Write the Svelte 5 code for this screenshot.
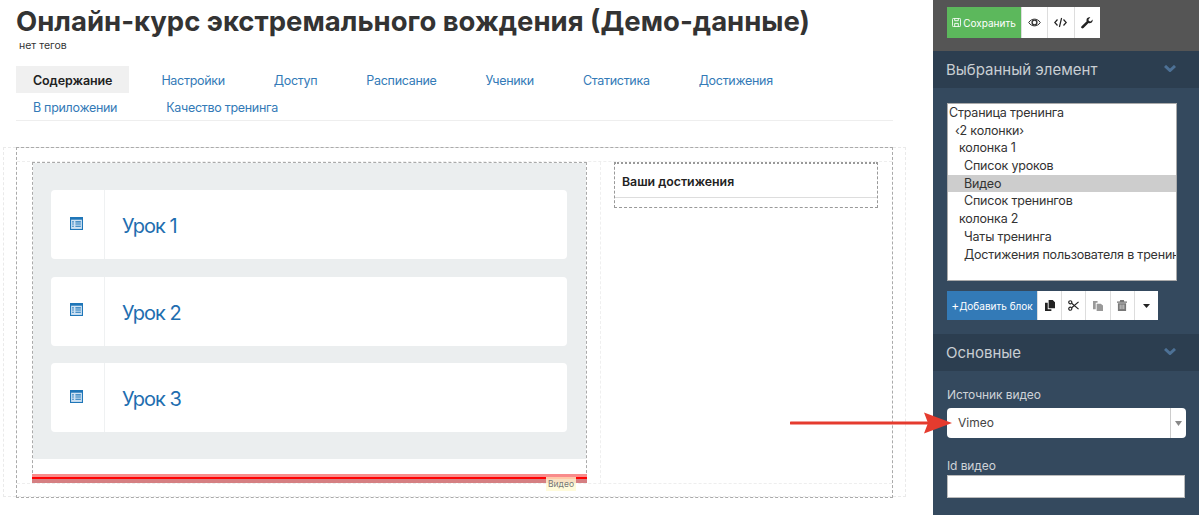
<script>
  const tabs = ["Содержание", "Настройки", "Доступ", "Расписание", "Ученики", "Статистика", "Достижения", "В приложении", "Качество тренинга"];
  const lessons = ["Урок 1", "Урок 2", "Урок 3"];
  const tree = [
    { label: "Страница тренинга", indent: 0 },
    { label: "‹2 колонки›", indent: 6 },
    { label: "колонка 1", indent: 10 },
    { label: "Список уроков", indent: 15 },
    { label: "Видео", indent: 15, selected: true },
    { label: "Список тренингов", indent: 15 },
    { label: "колонка 2", indent: 10 },
    { label: "Чаты тренинга", indent: 15 },
    { label: "Достижения пользователя в тренинге", indent: 15 }
  ];
</script>

<div class="page">
  <main>
    <h1>Онлайн-курс экстремального вождения (Демо-данные)</h1>
    <div class="tags">нет тегов</div>
    <nav>
      {#each tabs as tab, i}
        <a href="#tab" class:active={i === 0}>{tab}</a>
      {/each}
    </nav>

    <div class="canvas-ghost">
      <div class="canvas">
        <div class="row">
          <div class="left">
            <div class="lessons">
              {#each lessons as lesson}
                <div class="lesson">
                  <div class="lesson-icon">
                    <svg width="13" height="13" viewBox="0 0 12 12">
                      <rect x="0.5" y="0.5" width="11" height="11" fill="#cfe2f3" stroke="#1f76b8" />
                      <rect x="0" y="0" width="12" height="2.5" fill="#1f76b8" />
                      <path d="M2 4.5h1.5M5 4.5h5M2 6.5h1.5M5 6.5h5M2 8.5h1.5M5 8.5h5" stroke="#1f76b8" />
                    </svg>
                  </div>
                  <div class="lesson-title">{lesson}</div>
                </div>
              {/each}
            </div>
            <div class="video">
              <span class="video-tag">Видео</span>
            </div>
          </div>
          <div class="right">
            <div class="achievements">
              <div class="achievements-title">Ваши достижения</div>
            </div>
          </div>
        </div>
      </div>
    </div>
  </main>

  <aside>
    <div class="top">
      <div class="btn-group">
        <button class="btn save">
          <svg width="9" height="9" viewBox="0 0 10 10" fill="none" stroke="#fff"><rect x="0.5" y="0.5" width="9" height="9" rx="1" /><path d="M3 .5v2.5h4V.5M3 9.5V6h4v3.5" /></svg>
          Сохранить
        </button>
        <button class="btn icon tall" aria-label="Просмотр">
          <svg width="13" height="11" viewBox="0 0 13 11" fill="none" stroke="#333"><path d="M.7 5.500C3.500 1 9.500 1 12.300 5.500 9.500 10 3.500 10 .7 5.500Z" /><circle cx="6.500" cy="5.500" r="2.400" stroke-width="1.400" /></svg>
        </button>
        <button class="btn icon tall" aria-label="Код">
          <svg width="13" height="11" viewBox="0 0 13 11" fill="none" stroke="#222" stroke-width="1.200"><path d="M3.500 2.500.8 5.500l2.700 3M9.500 2.500l2.700 3-2.700 3M7.600 1 5.400 10" /></svg>
        </button>
        <button class="btn icon tall" aria-label="Настройки">
          <svg width="12" height="12" viewBox="0 0 12 12" fill="#222"><path d="M11.600 2.600 9.700 4.400 7.800 4 7.500 2.200 9.300.4C7.600-.2 5.600.9 5.500 2.900c0 .5 0 .9.2 1.300L.6 9.200c-.6.6-.6 1.400-.1 1.900.6.6 1.400.6 2 0l5-5c2.200.8 4.600-1.200 4.100-3.500Z" /></svg>
        </button>
      </div>
    </div>

    <div class="section-head">
      Выбранный элемент
      <svg class="chevron" width="12" height="7" viewBox="0 0 12 7" fill="none" stroke="#4d7196" stroke-width="3"><path d="M1 1l5 4.500 5-4.500" /></svg>
    </div>
    <div class="section-body first">
      <div class="tree">
        {#each tree as node}
          <div class="node" class:selected={node.selected} style:padding-left="{node.indent + 1}px">{node.label}</div>
        {/each}
      </div>
      <div class="btn-group actions">
        <button class="btn add"><span class="plus">+</span>Добавить блок</button>
        <button class="btn icon short" aria-label="Копировать">
          <svg width="10" height="11" viewBox="0 0 11 12" fill="#222"><path d="M4 0h4.500L11 2.500V9H4ZM0 3h3v7h4v2H0Z" /></svg>
        </button>
        <button class="btn icon short" aria-label="Вырезать">
          <svg width="11" height="11" viewBox="0 0 12 12" fill="none" stroke="#222" stroke-width="1.300"><circle cx="2.500" cy="2.500" r="1.700" /><circle cx="2.500" cy="9.500" r="1.700" /><path d="M4 3.500 11.500 10M4 8.500 11.500 2" /></svg>
        </button>
        <button class="btn icon short" aria-label="Вставить">
          <svg width="10" height="11" viewBox="0 0 11 12" fill="#999"><path d="M0 1h5v2H3v7H0ZM4 4h4.500L11 6v6H4Z" /></svg>
        </button>
        <button class="btn icon short" aria-label="Удалить">
          <svg width="10" height="11" viewBox="0 0 11 12" fill="#777"><path d="M3.500 0h4l.5 1.500h3V3H0V1.500h3ZM1 3.500h9V12H1Z" /><path d="M3.500 5v5M5.500 5v5M7.500 5v5" stroke="#fff" stroke-width=".7" /></svg>
        </button>
        <button class="btn icon short" aria-label="Ещё">
          <svg width="7" height="4" viewBox="0 0 9 5" fill="#222"><path d="M0 0h9L4.500 5Z" /></svg>
        </button>
      </div>
    </div>

    <div class="section-head">
      Основные
      <svg class="chevron" width="12" height="7" viewBox="0 0 12 7" fill="none" stroke="#4d7196" stroke-width="3"><path d="M1 1l5 4.500 5-4.500" /></svg>
    </div>
    <div class="section-body">
      <div class="label">Источник видео</div>
      <div class="select">
        <span class="select-value">Vimeo</span>
        <span class="select-arrow"><svg width="7" height="5" viewBox="0 0 7 5" fill="#888"><path d="M0 0h7L3.500 5Z" /></svg></span>
      </div>
      <div class="label second">Id видео</div>
      <div class="input"></div>
    </div>
  </aside>

  <svg class="arrow" width="165" height="28" viewBox="0 0 165 28">
    <path d="M1 14H138" stroke="#e53b2e" stroke-width="3" stroke-linecap="round" />
    <path d="M134 3.500 162 14 134 24.500 138 14Z" fill="#e53b2e" />
  </svg>
</div>

<style>
  :global(body) {
    margin: 0;
    background: #fff;
    font-family: Inter, "Liberation Sans", sans-serif;
  }

  .page {
    position: relative;
    display: flex;
    width: 1199px;
    height: 515px;
    overflow: hidden;
  }

  main {
    width: 933px;
    box-sizing: border-box;
    padding: 0 40px 0 16px;
    flex: none;
  }

  h1 {
    margin: 5px 0 0;
    font-size: 27.500px;
    line-height: 32px;
    font-weight: 700;
    color: #333;
    white-space: nowrap;
  }

  .tags {
    margin: 2px 0 0 3px;
    font-size: 10.500px;
    line-height: 13px;
    color: #333;
  }

  nav {
    display: flex;
    flex-wrap: wrap;
    margin-top: 14px;
    border-bottom: 1px solid #eee;
    height: 54px;
    align-content: flex-start;
  }

  nav a {
    padding: 0 17px;
    margin-right: 15px;
    height: 27px;
    line-height: 30px;
    font-size: 12.500px;
    letter-spacing: -0.3px;
    color: #337ab7;
    text-decoration: none;
    white-space: nowrap;
  }

  nav a.active {
    background: #f0f0f0;
    color: #222;
    font-weight: 600;
    letter-spacing: -0.1px;
  }

  .canvas-ghost {
    margin: 26px -13px 0;
    padding: 0 13px;
    border: 1px dashed #eaeaea;
    height: 350px;
    box-sizing: border-box;
  }

  .canvas {
    box-sizing: border-box;
    height: 351px;
    margin: -1px -1px 0 -1px;
    padding-top: 13px;
    border: 1px dashed #aaa;
  }

  .row {
    display: flex;
    box-sizing: border-box;
    height: 323px;
    padding: 0 14px 0 15px;
    gap: 13px;
    border-top: 1px dashed #eee;
    border-bottom: 1px dashed #eee;
  }

  .left {
    width: 555px;
    height: 321px;
    box-sizing: border-box;
    border: 1px dashed #aaa;
    border-width: 1px 1px 0;
    flex: none;
  }

  .lessons {
    background: #ebeeef;
    height: 296px;
    box-sizing: border-box;
    padding: 27px 19px 0 18px;
    display: flex;
    flex-direction: column;
    gap: 17.500px;
  }

  .lesson {
    display: flex;
    height: 69px;
    flex: none;
    background: #fff;
    border-radius: 4px;
  }

  .lesson-icon {
    width: 54px;
    flex: none;
    border-right: 1px solid #eff1f2;
    display: flex;
    align-items: center;
    justify-content: center;
    padding: 0 2px 3px 0;
    box-sizing: border-box;
  }

  .lesson-title {
    padding-left: 17px;
    font-size: 20px;
    letter-spacing: -1px;
    line-height: 72px;
    color: #1f6eb0;
  }

  .video {
    position: relative;
    margin: 15px -1px 0;
    height: 9px;
    background: linear-gradient(#f98b8b 0 3px, #f00 3px 5px, #d57f82 5px);
  }

  .video-tag {
    position: absolute;
    right: 11px;
    top: 3px;
    padding: 0 2px;
    font-size: 8.500px;
    line-height: 14px;
    color: #777;
    background: rgba(255, 250, 210, 0.8);
  }

  .right {
    flex: 1;
    border-left: 1px dashed #efefef;
    padding-left: 13px;
  }

  .achievements {
    height: 46px;
    box-sizing: border-box;
    border: 1px dashed #999;
    border-top: 2px dotted #999;
    background: linear-gradient(#fff 33px, #ddd 33px 34px, #fff 34px);
    padding: 10px 7px;
  }

  .achievements-title {
    font-size: 12.300px;
    font-weight: 600;
    line-height: 16px;
    color: #222;
  }

  aside {
    width: 266px;
    flex: none;
    background: #34495e;
    color: #ddd;
  }

  .top {
    height: 51px;
    background: #555;
    box-sizing: border-box;
    padding: 7px 14px;
  }

  .btn-group {
    display: flex;
  }

  .btn {
    border: none;
    padding: 0;
    margin: 0;
    font: inherit;
    display: flex;
    align-items: center;
    justify-content: center;
  }

  .save {
    width: 74px;
    height: 31px;
    gap: 2px;
    background: #5cb85c;
    color: #fff;
    font-size: 10px;
  }

  .icon {
    background: #fff;
    border-left: 1px solid #ddd;
  }

  .tall {
    width: 26.300px;
    height: 31px;
  }

  .short {
    width: 24.200px;
    height: 29px;
  }

  .section-head {
    position: relative;
    height: 37px;
    line-height: 37px;
    padding-left: 13px;
    background: #2c3e50;
    font-size: 15px;
    color: #c9ced3;
  }

  .chevron {
    position: absolute;
    right: 23px;
    top: 14px;
  }

  .section-body {
    padding: 0 13px;
  }

  .section-body.first {
    height: 246px;
    padding: 15px 14px 0;
    box-sizing: border-box;
  }

  .tree {
    width: 230px;
    height: 178px;
    box-sizing: border-box;
    background: #fff;
    border: 1px solid #aaa;
    overflow: hidden;
    white-space: nowrap;
  }

  .node {
    height: 17.700px;
    line-height: 17.700px;
    font-size: 12.500px;
    letter-spacing: -0.2px;
    color: #333;
  }

  .selected {
    background: #cdcdcd;
  }

  .actions {
    margin-top: 10px;
  }

  .add {
    width: 90px;
    height: 29px;
    background: #337ab7;
    color: #fff;
    font-size: 10px;
  }

  .plus {
    font-size: 12px;
  }

  .label {
    padding-top: 16px;
    font-size: 12px;
    letter-spacing: -0.1px;
    line-height: 15px;
    color: #cfd3d8;
    padding-left: 1px;
  }

  .label.second {
    padding-top: 20px;
  }

  .select {
    display: flex;
    margin: 6px 0 0 1px;
    height: 30px;
    width: 239px;
    background: #fff;
    border-radius: 4px;
  }

  .select-value {
    flex: 1;
    padding-left: 11px;
    font-size: 12px;
    line-height: 30px;
    color: #444;
  }

  .select-arrow {
    width: 15px;
    border-left: 1px solid #ccc;
    display: flex;
    align-items: center;
    justify-content: center;
  }

  .input {
    margin: 2px 0 0 1px;
    width: 238px;
    height: 23px;
    background: #fff;
    border: 1px solid #bbb;
    box-sizing: border-box;
  }

  .arrow {
    position: absolute;
    left: 790px;
    top: 409px;
  }
</style>
